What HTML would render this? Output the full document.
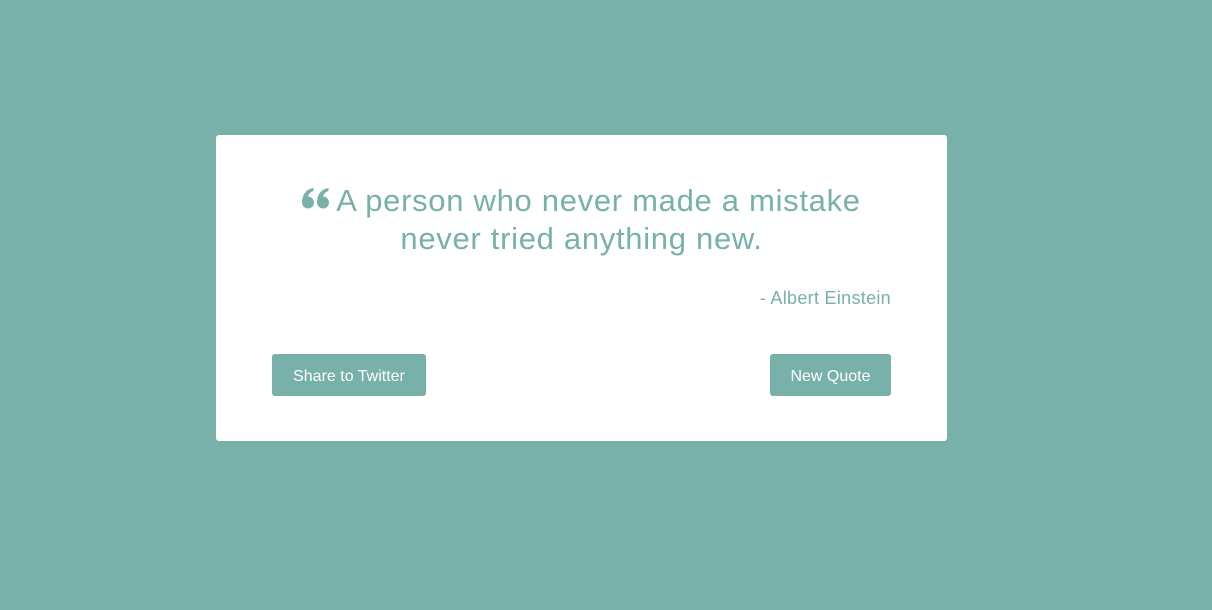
<!DOCTYPE html>
<html><head><style>
body{margin:0;width:1212px;height:610px;background:#77b1a9;font-family:"Liberation Sans",sans-serif;position:relative;overflow:hidden}
.card{position:absolute;left:216px;top:135px;width:731px;height:306px;background:#fff;border-radius:3px}
.q{position:absolute;left:0;width:731px;top:47px;text-align:center;color:#77b1a9;font-size:31px;line-height:38px;letter-spacing:0.7px}
.q svg{vertical-align:1px;margin-right:6px}
.a{position:absolute;right:56px;top:153px;color:#77b1a9;font-size:18px;letter-spacing:0.3px}
.btn{position:absolute;top:219px;height:42px;background:#77b1a9;color:#fff;font-size:16px;line-height:45px;text-align:center;border-radius:3px}
</style></head><body>
<div class="card">
<div class="q"><svg width="28" height="22" viewBox="0 0 28 22"><path fill="#77b1a9" d="M0 15a6 6 0 1 0 6-6.5c.5-2.5 2.5-4.5 5.5-5.5V0C4 1 0 7 0 15zM15 15a6 6 0 1 0 6-6.5c.5-2.5 2.5-4.5 5.5-5.5V0C19 1 15 7 15 15z"/></svg>A person who never made a mistake<br>never tried anything new.</div>
<div class="a">- Albert Einstein</div>
<div class="btn" style="left:56px;width:154px">Share to Twitter</div>
<div class="btn" style="left:554px;width:121px">New Quote</div>
</div>
</body></html>
